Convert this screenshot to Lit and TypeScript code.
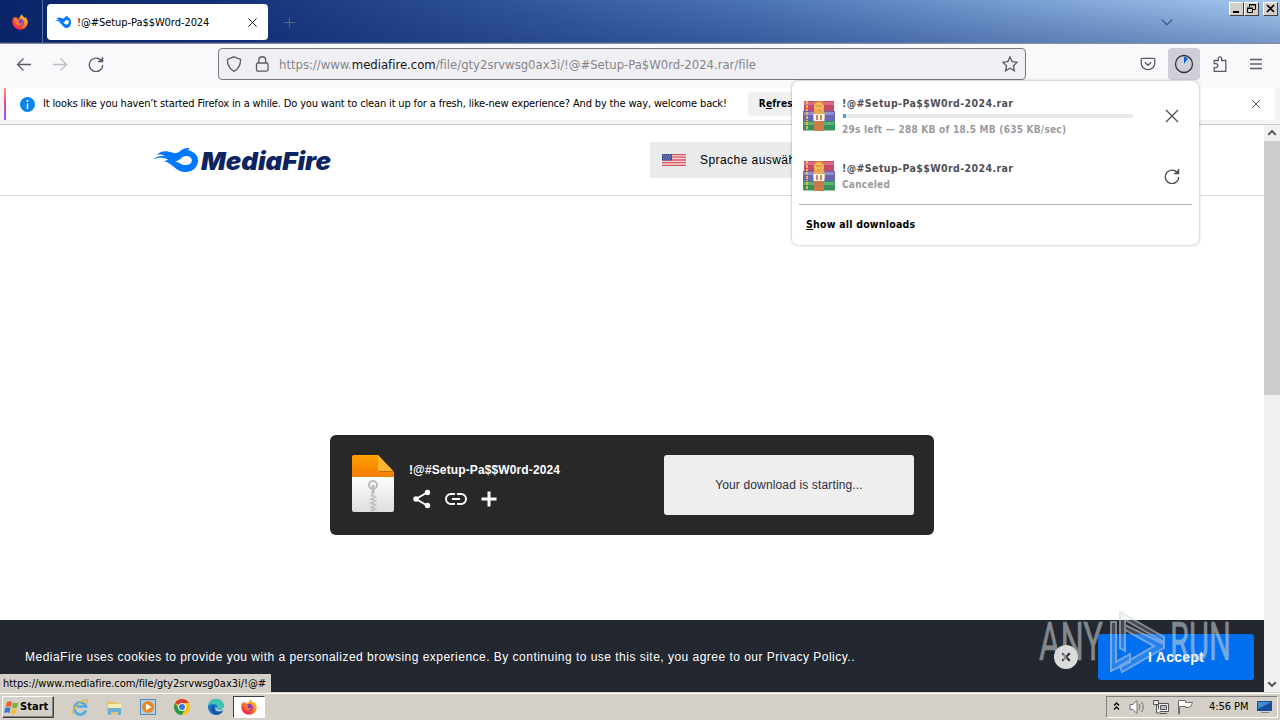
import {html, svg, css, LitElement} from 'lit'
import {customElement, property} from 'lit/decorators.js'

const icons = {
  back: svg`<path d="M15 8.500H2M7.500 2.500l-6 6 6 6" />`,
  forward: svg`<path d="M1 8.500h13M8.500 2.500l6 6-6 6" />`,
  reload: svg`<path d="M13.800 5.500A6.700 6.700 0 1 0 14.700 9M10 5.600h4.600V1" /><path d="M10.500 5.600h4.100V1.500z" fill="currentColor" stroke="none" />`,
  shield: svg`<path d="M8 .8 14.600 3.500C14.600 9 12.500 13 8 15.300 3.500 13 1.400 9 1.400 3.500z" />`,
  lock: svg`<rect x="2.500" y="7" width="11.500" height="8.200" rx="1.500" /><path d="M4.800 7V4.200a3.400 3.400 0 0 1 6.900 0V7" />`,
  star: svg`<path d="m8 .9 2.100 4.700 5.100.6-3.700 3.500.9 5.100L8 12.300l-4.400 2.500.9-5.100L.8 6.200l5.100-.6z" />`,
  pocket: svg`<path d="M2.400 2.300h11.200a1.200 1.200 0 0 1 1.200 1.200v3.800a6.800 6.300 0 0 1-13.600 0V3.500a1.200 1.200 0 0 1 1.200-1.200zM4.800 6.300 8 9.300l3.200-3" />`,
  puzzle: svg`<path d="M2.200 15.300V11.600h1.600a2 2 0 0 0 0-4H2.200V4.500h4V2.600a1.700 1.700 0 0 1 3.400 0v1.900h4.200v10.800z" />`,
  menu: svg`<path d="M2 3.500h12M2 8h12M2 12.500h12" />`,
  close: svg`<path d="m2 2 12 12M14 2 2 14" />`,
  plus: svg`<path d="M8 1.500v13M1.500 8h13" />`,
  chevron: svg`<path d="m2 5.200 6 5.800 6-5.800" />`,
}

const icon = (name: keyof typeof icons, size = 16) => html`
  <svg class="icon" viewBox="0 0 16 16" width=${size} height=${size}>${icons[name]}</svg>`

const firefox = (size: number) => html`
  <svg viewBox="0 0 16 16" width=${size} height=${size}>
    <defs>
      <linearGradient id="fox" x1="1" y1="0" x2=".2" y2="1">
        <stop offset="0" stop-color="#ffe14a" /><stop offset=".45" stop-color="#ff8a1e" />
        <stop offset=".75" stop-color="#ff4338" /><stop offset="1" stop-color="#e3126e" />
      </linearGradient>
    </defs>
    <path d="M8 15.800A7.700 7.700 0 0 1 .3 8.200C.3 5.800 1 4 2.200 2.600l.5 1.500 1.800-1.300.3 1.600 2 .1C8 3 8.300 1.500 9.900.2c.3 1.800 2 2.400 2.900 3.900l.3-1c1.700 1.500 2.700 3.200 2.700 5.300A7.700 7.700 0 0 1 8 15.800z" fill="url(#fox)" />
    <circle cx="8.300" cy="8.500" r="3.500" fill="#7a3fd0" />
    <path d="M3 5.800c2.100-.9 3 .5 4.700.5L6.300 8c.5 1.500 2.700 1.700 4.500.3-.4 3-4.200 4.300-6.300 2.200C3.200 9.300 2.800 7.500 3 5.800z" fill="#ff7b22" />
  </svg>`

const flame = svg`
  <path d="M0 11.500C4 8 8 7.600 12 8.300 9.700 6.400 6.900 6.300 3.900 6.900 8 2.300 14 2.600 19 4.600c3.200 1.300 5 .2 7-.7C30-.1 34-.1 37-.1c-1.300.7-1.900 1.500-1.800 2.300C41 3.600 45 7 45 12.400 45 19 39.500 24 32.500 24 22 24 20 14.300 10.400 13.200c2.600-.4 3.600-1.100 4.600-1.800C9 9.200 5 9.400 0 11.500zM22 13.500c4.500.2 5.400 3.600 10 3.600 4 0 6.800-1.800 6.800-4.700 0-2.800-2.500-4.500-5.800-4.500-4.700 0-5.500 4.600-11 5.600z" fill="#0077ff" fill-rule="evenodd" />`

const archive = html`
  <svg viewBox="0 0 32 32" width="32" height="32">
    <path d="M1 1h30v10H1z" fill="#c4496a" /><path d="M1 2h30v3H1z" fill="#dc6c86" />
    <path d="M0 11h32v10H0z" fill="#6a66b4" /><path d="M1 12h30v3H1z" fill="#8f8ecd" />
    <path d="M0 21h32v9.500H0z" fill="#359259" /><path d="M1 22h30v3H1z" fill="#5eb177" />
    <path d="M4 1v10M4 12v9M4 22v8" stroke="#f0b455" stroke-width="2" stroke-dasharray="3 1" />
    <path d="M11 1h10v30H11z" fill="#cc7a4a" />
    <circle cx="16" cy="7" r="5" fill="#f3bb5c" />
    <path d="M11 10h10l1 8H10z" fill="#eba94f" /><path d="M13 6h6M14 10h4" stroke="#d08a3a" />
    <path d="M10.500 14h11v7h-11z" fill="#fff6ea" /><path d="M14 15v5M18 15v5" stroke="#a6683c" stroke-width="1.500" />
  </svg>`

@customElement('download-item')
export class DownloadItem extends LitElement {
  @property() name = ''
  @property() status = ''
  @property({type: Number}) progress = -1

  static styles = css`
    :host {
      display: flex;
      align-items: center;
      height: 60px;
      padding: 0 19px 0 11px;
      font: bold 10.500px/14px "DejaVu Sans Condensed", "DejaVu Sans", sans-serif;
      color: #505055;
    }
    .info {
      width: 291px;
      margin: 0 31px 0 8px;
    }
    .name {
      margin-left: -1px;
      letter-spacing: 0.400px;
      white-space: nowrap;
    }
    .track {
      height: 4px;
      margin: 4px 0;
      background: #e8e8e8;
      border-radius: 2px;
    }
    .fill {
      height: 100%;
      background: #45a1c8;
    }
    .status {
      font-size: 10px;
      letter-spacing: 0.250px;
      color: #9a9a9d;
      white-space: nowrap;
      margin: 3px 0 0 -1px;
    }
    .track + .status {
      margin-top: 5px;
      margin-bottom: -1px;
    }
    svg {
      display: block;
      flex: none;
    }
    .icon {
      fill: none;
      stroke: currentColor;
      stroke-width: 1.300;
    }
  `

  render() {
    const active = this.progress >= 0
    return html`
      ${archive}
      <div class="info">
        <div class="name">${this.name}</div>
        ${active ? html`<div class="track"><div class="fill" style="width:${this.progress}%"></div></div>` : ''}
        <div class="status">${this.status}</div>
      </div>
      ${icon(active ? 'close' : 'reload')}
    `
  }
}

@customElement('app-root')
export class AppRoot extends LitElement {
  static styles = css`
    :host {
      display: flex;
      flex-direction: column;
      position: relative;
      width: 1280px;
      height: 720px;
      overflow: hidden;
      background: #fff;
      color: #000;
      font: 11px/14px "DejaVu Sans Condensed", "DejaVu Sans", sans-serif;
      white-space: nowrap;
    }
    * {
      box-sizing: border-box;
    }
    svg {
      display: block;
      flex: none;
    }
    .icon {
      fill: none;
      stroke: currentColor;
      stroke-width: 1.300;
    }
    .titlebar {
      display: flex;
      height: 44px;
      flex: none;
      background: linear-gradient(transparent, rgba(10, 36, 106, 0.300) 96%, #7f8da9 98%), linear-gradient(90deg, #0a246a, #14327a 18%, #4a72b4 58%, #a6caf0);
    }
    .view {
      display: flex;
      align-items: center;
      width: 43px;
      padding-left: 12px;
      border-right: 1px solid #5b6d9c;
    }
    .tab {
      display: flex;
      align-items: center;
      width: 221px;
      height: 36px;
      margin: 4px 0 0 4px;
      padding: 0 10px 0 8px;
      border-radius: 4px;
      background: #fff;
    }
    .tab span {
      flex: 1;
      margin-left: 6px;
      padding-top: 1px;
      letter-spacing: -0.060px;
    }
    .new-tab {
      margin: 16px 0 0 15px;
      color: #5a6472;
    }
    .tabs-menu {
      margin: 15px 55px 0 auto;
      color: #34517d;
    }
    .controls {
      display: flex;
      padding: 2px 2px 0 0;
    }
    .control {
      width: 15px;
      height: 14px;
      background: #d4d0c8;
      border: 1px solid;
      border-color: #fff #404040 #404040 #fff;
    }
    .control:last-child {
      margin-left: 4px;
    }
    .control svg {
      fill: none;
      stroke: #000;
    }
    .toolbar {
      display: flex;
      align-items: center;
      flex: none;
      height: 44px;
      padding: 0 16px 4px;
      background: #f9f9fb;
      color: #5b5b66;
    }
    .nav {
      display: flex;
      gap: 20px;
      width: 202px;
    }
    .nav .icon:nth-child(2) {
      color: #bbbbc1;
    }
    .urlbar {
      display: flex;
      align-items: center;
      width: 808px;
      height: 32px;
      padding: 0 7px;
      border: 1px solid #77777f;
      border-radius: 4px;
      background: #f0f0f4;
    }
    .urlbar .icon + .icon {
      margin-left: 12px;
    }
    .url {
      flex: 1;
      margin-left: 9px;
      padding-top: 1px;
      font-size: 13px;
      color: #858589;
      letter-spacing: -0.030px;
    }
    .url b {
      font-weight: normal;
      color: #15141a;
    }
    .actions {
      display: flex;
      align-items: center;
      margin-left: auto;
    }
    .progress {
      display: grid;
      place-items: center;
      width: 32px;
      height: 32px;
      margin: 0 12px;
      border-radius: 4px;
      background: #cfcfd8;
    }
    .actions .icon:last-child {
      margin-left: 20px;
    }
    .notice {
      flex: none;
      height: 37px;
      padding: 0 5px 4px 4px;
      background: #f4f4f5;
      border-bottom: 1px solid #ccccce;
    }
    .notice-body {
      display: flex;
      align-items: center;
      height: 32px;
      padding-right: 14px;
      padding-left: 14px;
      border-left: 2px solid;
      border-image: linear-gradient(#ff9a6c, #e34a9c 45%, #9059ff) 1;
      background: #fff;
    }
    .notice-text {
      margin: 0 21px 0 8px;
      letter-spacing: -0.150px;
    }
    .refresh {
      width: 130px;
      padding: 5px 11px;
      border-radius: 4px;
      background: #f0f0f0;
      font-weight: bold;
      font-size: 10px;
      letter-spacing: 0.200px;
    }
    .notice .icon {
      margin-left: auto;
      color: #5b5b66;
      stroke-width: 1.600;
    }
    u {
      text-underline-offset: 1px;
    }
    .viewport {
      display: flex;
      height: 567px;
      flex: none;
    }
    .page {
      position: relative;
      display: flex;
      flex-direction: column;
      flex: 1;
      font-family: "Liberation Sans", Arial, sans-serif;
    }
    .site-header {
      display: flex;
      align-items: center;
      height: 71px;
      padding-left: 153px;
      border-bottom: 1px solid #dcdde0;
    }
    .language {
      display: flex;
      align-items: center;
      width: 200px;
      height: 36px;
      margin-left: 317px;
      padding-left: 12px;
      gap: 14px;
      border-radius: 2px;
      background: #e8eaeb;
      font-size: 12px;
      letter-spacing: 0.440px;
    }
    .card {
      display: flex;
      width: 604px;
      height: 100px;
      margin: 239px auto 0;
      padding: 20px 20px 20px 22px;
      border-radius: 6px;
      background: #282828;
      color: #fff;
    }
    .file {
      flex: 1;
      margin-left: 15px;
      padding-top: 8px;
      font-weight: bold;
      font-size: 12px;
      letter-spacing: 0.120px;
    }
    .file-actions {
      display: flex;
      gap: 12px;
      margin-top: 10px;
    }
    .starting {
      display: grid;
      place-items: center;
      width: 250px;
      height: 60px;
      border-radius: 3px;
      background: #eee;
      color: #2b2d42;
      font-size: 12px;
      letter-spacing: 0.140px;
    }
    .cookies {
      display: flex;
      align-items: center;
      height: 72px;
      margin-top: auto;
      padding: 2px 10px 0 25px;
      background: #222730;
      color: #fff;
      font-size: 12px;
    }
    .cookies p {
      flex: 1;
      margin: 0;
      letter-spacing: 0.480px;
    }
    .dismiss {
      display: grid;
      place-items: center;
      width: 24px;
      height: 24px;
      margin-right: 20px;
      border-radius: 50%;
      background: #dcdcdc;
      color: #222;
    }
    .dismiss .icon {
      stroke-width: 3;
    }
    .accept {
      display: grid;
      place-items: center;
      width: 156px;
      height: 46px;
      border-radius: 3px;
      background: #0070f0;
      font-weight: bold;
      font-size: 14px;
      letter-spacing: 0.250px;
    }
    .link-status {
      position: absolute;
      left: 0;
      bottom: 0;
      width: 271px;
      height: 18px;
      padding: 3px 0 0 3px;
      background: #d4d0c8;
      font: 11px/14px "DejaVu Sans Condensed", "DejaVu Sans", sans-serif;
      letter-spacing: -0.030px;
    }
    .scrollbar {
      display: flex;
      flex-direction: column;
      width: 16px;
      background: #f0f0f0;
      color: #505050;
    }
    .scrollbar .icon {
      margin: 3px;
      stroke-width: 3;
    }
    .thumb {
      height: 254px;
      margin: 0 0 auto;
      background: #cdcdcd;
    }
    .taskbar {
      display: flex;
      align-items: flex-start;
      height: 28px;
      padding: 2px 2px 0;
      border-top: 1px solid #d4d0c8;
      box-shadow: inset 0 1px #fff;
      background: #d4d0c8;
    }
    .start {
      display: flex;
      align-items: center;
      gap: 1px;
      width: 52px;
      height: 22px;
      margin: 1px 10px 0 0;
      padding-left: 1px;
      border: 1px solid;
      border-color: #fff #404040 #404040 #fff;
      box-shadow: inset -1px -1px #808080;
      font-weight: bold;
      letter-spacing: 0.050px;
    }
    .launch {
      display: grid;
      place-items: center;
      width: 32px;
      height: 22px;
      margin: 1px 2px 0 0;
    }
    .launch.active {
      margin-left: -1px;
      border: 1px solid;
      border-color: #404040 #fff #fff #404040;
      background: #fff;
    }
    .tray {
      display: flex;
      align-items: center;
      gap: 8px;
      width: 172px;
      height: 22px;
      margin: 1px 0 0 auto;
      padding-left: 5px;
      border: 1px solid;
      border-color: #808080 #fff #fff #808080;
    }
    .clock {
      margin-left: 7px;
      letter-spacing: -0.050px;
    }
    .downloads {
      position: absolute;
      left: 792px;
      top: 81px;
      width: 407px;
      height: 164px;
      padding-top: 5px;
      border-radius: 7px;
      background: #fff;
      box-shadow: 0 0 3px rgba(0, 0, 0, 0.350);
    }
    .show-all {
      margin: -2px 7px 0;
      padding: 12px 7px;
      border-top: 1px solid #b4b4b8;
      font-weight: bold;
      font-size: 10.500px;
      letter-spacing: 0.220px;
    }
    .watermark {
      position: absolute;
      left: 1036px;
      top: 606px;
      opacity: 0.550;
    }
  `

  downloads = [
    {name: '!@#Setup-Pa$$W0rd-2024.rar', status: '29s left — 288 KB of 18.5 MB (635 KB/sec)', progress: 1},
    {name: '!@#Setup-Pa$$W0rd-2024.rar', status: 'Canceled', progress: -1},
  ]

  renderTitlebar() {
    return html`
      <div class="titlebar">
        <div class="view">${firefox(16)}</div>
        <div class="tab">
          <svg viewBox="0 0 45 24" width="16" height="12" preserveAspectRatio="none">${flame}</svg>
          <span>!@#Setup-Pa$$W0rd-2024</span>
          ${icon('close', 11)}
        </div>
        <div class="new-tab">${icon('plus', 13)}</div>
        <div class="tabs-menu">${icon('chevron', 14)}</div>
        <div class="controls">
          <div class="control"><svg width="13" height="12"><path d="M3 9h6" stroke-width="2" /></svg></div>
          <div class="control"><svg width="13" height="12"><path d="M4.500 4V1.500h6v5H8M4 2h7M2.500 5.500h5v4h-5zM2 5h6" /></svg></div>
          <div class="control"><svg width="13" height="12"><path d="m3 2 7 7M10 2 3 9" stroke-width="1.700" /></svg></div>
        </div>
      </div>`
  }

  renderToolbar() {
    return html`
      <div class="toolbar">
        <div class="nav">${icon('back')}${icon('forward')}${icon('reload')}</div>
        <div class="urlbar">
          ${icon('shield')}${icon('lock')}
          <div class="url">https://www.<b>mediafire.com</b>/file/gty2srvwsg0ax3i/!@#Setup-Pa$W0rd-2024.rar/file</div>
          ${icon('star')}
        </div>
        <div class="actions">
          ${icon('pocket')}
          <div class="progress">
            <svg width="20" height="20">
              <path d="M10 10V3a7 7 0 0 1 4 1.300z" fill="#0061e0" />
              <circle cx="10" cy="10" r="8.500" fill="none" stroke="#33333b" stroke-width="1.300" />
            </svg>
          </div>
          ${icon('puzzle')}${icon('menu')}
        </div>
      </div>`
  }

  renderNotice() {
    return html`
      <div class="notice">
        <div class="notice-body">
          <svg width="15" height="15">
            <circle cx="7.500" cy="7.500" r="7.500" fill="#0a84e8" />
            <path d="M7.500 3v2M7.500 6.500V12" stroke="#fff" stroke-width="1.400" />
          </svg>
          <div class="notice-text">It looks like you haven’t started Firefox in a while. Do you want to clean it up for a fresh, like-new experience? And by the way, welcome back!</div>
          <div class="refresh">R<u>e</u>fresh Firefox…</div>
          ${icon('close', 10)}
        </div>
      </div>`
  }

  renderCard() {
    return html`
      <div class="card">
        <svg width="42" height="58">
          <defs>
            <linearGradient id="paper" x2="0" y2="1"><stop stop-color="#fff" /><stop offset="1" stop-color="#dedede" /></linearGradient>
            <linearGradient id="orange" x2="0" y2="1"><stop stop-color="#ffa000" /><stop offset="1" stop-color="#f57c00" /></linearGradient>
          </defs>
          <path d="M0 21h42v34q0 2-2 2H2q-2 0-2-2z" fill="url(#paper)" />
          <path d="M2 0h24l16 17v5H0V2q0-2 2-2z" fill="url(#orange)" />
          <path d="M26 0l16 17H28q-2 0-2-2z" fill="#ffb52e" />
          <path d="M26 16h16v1H28z" fill="#c96600" />
          <circle cx="21" cy="30" r="4" fill="none" stroke="#bcbcbc" stroke-width="2" />
          <path d="M21 30v9" stroke="#bcbcbc" stroke-width="3" />
          <path d="m19 40 4 2-4 2 4 2-4 2 4 2-4 2 4 2-4 2" fill="none" stroke="#c2c2c2" stroke-width="2" />
        </svg>
        <div class="file">
          !@#Setup-Pa$$W0rd-2024
          <div class="file-actions">
            <svg width="24" height="24" viewBox="0 0 24 24">
              <path d="M19 5 7 12l12 7" fill="none" stroke="#fff" stroke-width="2" />
              <circle cx="18.500" cy="5.500" r="2.700" fill="#fff" /><circle cx="7" cy="12" r="2.700" fill="#fff" /><circle cx="18.500" cy="18.500" r="2.700" fill="#fff" />
            </svg>
            <svg width="22" height="24" viewBox="1 0 22 24" fill="none" stroke="#fff" stroke-width="2">
              <path d="M11 7H7a5 5 0 0 0 0 10h4M13 7h4a5 5 0 0 1 0 10h-4M8 12h8" />
            </svg>
            <svg width="22" height="24"><path d="M10 4.500v15M2.500 12h15" stroke="#fff" stroke-width="3" /></svg>
          </div>
        </div>
        <div class="starting">Your download is starting...</div>
      </div>`
  }

  renderPage() {
    return html`
      <div class="viewport">
        <div class="page">
          <div class="site-header">
            <svg width="180" height="30" viewBox="0 -3 180 30">
              ${flame}
              <text x="48" y="21.500" font-family="Inter, sans-serif" font-size="24.500" font-weight="900" font-style="italic" fill="#0d2463" textLength="130" lengthAdjust="spacingAndGlyphs">MediaFire</text>
            </svg>
            <div class="language">
              <svg width="24" height="12">
                <path d="M0 0h24v12H0z" fill="#f3dada" />
                <path d="M0 .5h24M0 3.200h24M0 6h24M0 8.700h24M0 11.500h24" stroke="#d75565" stroke-width="1.300" />
                <path d="M0 0h10v6.500H0z" fill="#47539a" />
                <path d="M1 1.500h8M2 3.200h7M1 5h8" stroke="#9ba4ce" stroke-width=".7" stroke-dasharray="1 1" />
              </svg>
              Sprache auswählen
            </div>
          </div>
          ${this.renderCard()}
          <div class="cookies">
            <p>MediaFire uses cookies to provide you with a personalized browsing experience. By continuing to use this site, you agree to our Privacy Policy..</p>
            <div class="dismiss">${icon('close', 10)}</div>
            <div class="accept">I Accept</div>
          </div>
          <div class="link-status">https://www.mediafire.com/file/gty2srvwsg0ax3i/!@#</div>
        </div>
        <div class="scrollbar">
          <svg class="icon" width="10" height="10" viewBox="0 0 16 16"><path d="m2 11 6-6 6 6" /></svg>
          <div class="thumb"></div>
          ${icon('chevron', 10)}
        </div>
      </div>`
  }

  renderTaskbar() {
    return html`
      <div class="taskbar">
        <div class="start">
          <svg width="15" height="15" viewBox="0 0 15 15">
            <path d="M3 2c2-1 3-1 5 0L7 7C5 6 4 6 1.500 7z" fill="#e76530" />
            <path d="M9 2.500c2 1 3.500 1 5.500 0l-1.500 5c-2 1-3 1-5 0z" fill="#78b43c" />
            <path d="M1.300 8c2-1 3.500-1 5.300 0l-1.300 5c-2-1-3-1-5.300 0z" fill="#3a7ac4" />
            <path d="M7.700 8.500c2 1 3.300 1 5.200 0l-1.300 5c-2 1-3.500 1-5.300 0z" fill="#f4bf31" />
          </svg>
          Start
        </div>
        <div class="launch">
          <svg width="18" height="18" viewBox="0 0 18 18" fill="none">
            <path d="M15 12.500A6 6 0 1 1 15 8.500H5.500" stroke="#4aaee2" stroke-width="2.700" />
            <path d="M2 15.500C-1 15 8 2.500 15 2c2 0 1.500 2 .5 4" stroke="#e5b83b" stroke-width="1.300" />
          </svg>
        </div>
        <div class="launch">
          <svg width="17" height="17" viewBox="0 0 17 17">
            <path d="M1 2h6l1 2h7v11H1z" fill="#e5c463" /><path d="M2 5h13v4H2z" fill="#f9ecaf" />
            <path d="M2 9h13v7h-3v-3H5v3H2z" fill="#6baed4" />
          </svg>
        </div>
        <div class="launch">
          <svg width="16" height="16" viewBox="0 0 16 16">
            <path d="M.5.500h15v15H.5z" fill="#acd2ee" stroke="#5688b5" /><circle cx="8" cy="8" r="6" fill="#ee861b" />
            <path d="m6 4.500 5.500 3.500L6 11.500z" fill="#fff" />
          </svg>
        </div>
        <div class="launch">
          <svg width="16" height="16" viewBox="0 0 16 16">
            <circle cx="8" cy="8" r="8" fill="#fbc116" />
            <path d="M8 8 1.100 4A8 8 0 0 1 14.900 4H8z" fill="#e33b2e" /><path d="M1.100 4A8 8 0 0 0 7.500 16L11 10.500 5 10z" fill="#229a4c" />
            <circle cx="8" cy="8" r="3.900" fill="#fff" /><circle cx="8" cy="8" r="3" fill="#3479e0" />
          </svg>
        </div>
        <div class="launch">
          <svg width="16" height="16" viewBox="0 0 16 16">
            <circle cx="8" cy="8" r="8" fill="#1673c5" />
            <path d="M.2 7C1 2.500 4.500 0 8 0c5 0 8 3.700 8 7 0 3-2.500 4-4.500 4-2 0-2.500-.7-2.500-1 1-1 1-4-2-4.500C4.200 5 1.500 5 .2 7z" fill="#3fc6b3" />
            <path d="M7 6C4.500 8 5 12.500 10 13.500c2 .3 3.500-.3 4.500-1C11 18 4 15 3.500 11 3.300 8.500 4.500 6 7 6z" fill="#164f9e" />
            <path d="M8 7.500c-1.500 2.500 0 5 4 4.800L16 11V8l-3 3c-2 .3-3.500-.3-4-1z" fill="#d4d0c8" />
          </svg>
        </div>
        <div class="launch active">${firefox(16)}</div>
        <div class="tray">
          <svg width="9" height="12" fill="none" stroke="#000" stroke-width="1.400"><path d="m2 4.500 2.500-2.500L7 4.500M2 8.500 4.500 6 7 8.500" /></svg>
          <svg width="16" height="16" fill="none" stroke="#707070">
            <path d="M1 5.500h3l4-4v13l-4-4H1z" fill="#fff" /><path d="M10 5q2 3 0 6M12.500 3q3.500 5 0 10" />
          </svg>
          <svg width="16" height="16" fill="none" stroke="#555">
            <path d="M5.500 4.500h10v8h-10zM7 14.500h7" fill="#eee" /><path d="M7.500 6.500h6v4h-6z" fill="#bbb" /><path d="M.5 1.500h5v4h-5zM3.500 6v8h4" fill="#eee" />
          </svg>
          <svg width="17" height="16" fill="#fff" stroke="#707070"><path d="M1.500 15V1.500h7v2h7q-1 5-4 5h-3v-1h-6V15z" /></svg>
          <span class="clock">4:56 PM</span>
          <svg width="16" height="14">
            <path d="M0 1h15v10H0z" fill="#174d9a" /><path d="M1 2h13L1 9z" fill="#438bd5" /><path d="M4 12h8v1H4z" fill="#71869b" />
          </svg>
        </div>
      </div>`
  }

  render() {
    return html`
      ${this.renderTitlebar()}
      ${this.renderToolbar()}
      ${this.renderNotice()}
      ${this.renderPage()}
      ${this.renderTaskbar()}
      <div class="downloads">
        ${this.downloads.map(d => html`<download-item .name=${d.name} .status=${d.status} .progress=${d.progress}></download-item>`)}
        <div class="show-all"><u>S</u>how all downloads</div>
      </div>
      <svg class="watermark" width="204" height="72" fill="#d3d6dc" font-family="Roboto, sans-serif" font-size="53">
        <text x="3" y="54" textLength="64" lengthAdjust="spacingAndGlyphs" stroke="#d3d6dc" stroke-width=".6">ANY</text>
        <g fill="#d3d6dc" fill-opacity=".35" stroke="#d3d6dc" stroke-width="2">
          <path d="M75 16h5v40l14-8v8L75 65z" />
          <path d="M84 42V6l44 25v5L89 14v31z" />
          <path d="M89 19l39 19v4L86 66l-2-6 34-20-29-16z" />
        </g>
        <text x="134" y="54" textLength="61" lengthAdjust="spacingAndGlyphs" stroke="#d3d6dc" stroke-width=".6">RUN</text>
      </svg>
    `
  }
}
